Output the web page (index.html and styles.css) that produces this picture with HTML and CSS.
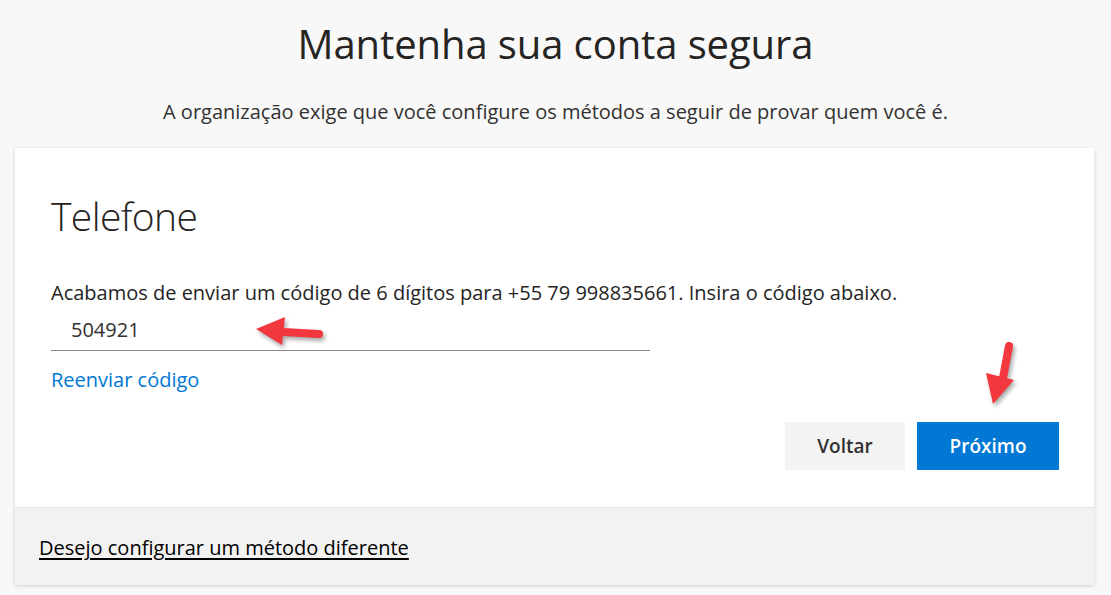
FILE: index.html
```html
<!DOCTYPE html>
<html lang="pt-BR">
<head>
<meta charset="utf-8">
<title>Mantenha sua conta segura</title>
<link rel="stylesheet" href="styles.css">
</head>
<body>
<header class="page-head">
  <h1 class="title">Mantenha sua conta segura</h1>
  <p class="subtitle">A organização exige que você configure os métodos a seguir de provar quem você é.</p>
</header>
<main class="card">
  <section class="card-body">
    <h2 class="method">Telefone</h2>
    <p class="info">Acabamos de enviar um código de 6 dígitos para +55 79 998835661. Insira o código abaixo.</p>
    <div class="field">
      <input class="code" type="text" value="504921" aria-label="Código">
    </div>
    <a class="resend" href="#">Reenviar código</a>
    <div class="actions">
      <button class="btn btn-back" type="button">Voltar</button>
      <button class="btn btn-next" type="button">Próximo</button>
    </div>
    <svg class="arrow arrow-left" width="80" height="44" viewBox="0 0 80 44" aria-hidden="true">
      <path d="M70 20 L34 18" stroke="#f2373f" stroke-width="8" stroke-linecap="round" fill="none"/>
      <path d="M7 15 L36 3 L33 31 Z" fill="#f2373f"/>
    </svg>
    <svg class="arrow arrow-down" width="44" height="80" viewBox="0 0 44 80" aria-hidden="true">
      <path d="M29 6 L23 38" stroke="#f2373f" stroke-width="8" stroke-linecap="round" fill="none"/>
      <path d="M6 33 L34 40 L13 64 Z" fill="#f2373f"/>
    </svg>
  </section>
  <footer class="card-foot">
    <a class="other" href="#">Desejo configurar um método diferente</a>
  </footer>
</main>
</body>
</html>
```

FILE: styles.css
```css
* { box-sizing: border-box; }
html, body { margin: 0; padding: 0; }
body {
  background: #f8f8f8;
  color: #323130;
  font-family: "Open Sans", "Noto Sans", "DejaVu Sans", sans-serif;
  width: 1111px;
  height: 595px;
  overflow: hidden;
}
.page-head {
  text-align: center;
  padding-top: 17px;
}
.title {
  margin: 0;
  font-weight: 400;
  font-size: 40px;
  line-height: 54px;
  letter-spacing: -0.1px;
  color: #252423;
}
.subtitle {
  margin: 27px 0 0;
  font-size: 20px;
  line-height: 28px;
  color: #323130;
}
.card {
  margin: 22px 17px 0 15px;
  background: #fff;
  box-shadow: 0 1px 4px rgba(0,0,0,0.16);
}
.card-body {
  position: relative;
  height: 359px;
  padding: 40px 35px 0 36px;
}
.method {
  margin: 0;
  font-weight: 300;
  font-size: 39px;
  line-height: 56px;
  letter-spacing: -0.6px;
  color: #252423;
}
.info {
  margin: 35px 0 0;
  font-size: 20px;
  line-height: 28px;
  color: #252423;
}
.field {
  margin-top: 5px;
  width: 599px;
  border-bottom: 1px solid #8a8886;
}
.code {
  display: block;
  width: 100%;
  border: 0;
  outline: 0;
  background: transparent;
  padding: 4px 0 6px 20px;
  font: inherit;
  font-size: 20px;
  line-height: 28px;
  color: #323130;
}
.resend {
  display: inline-block;
  margin-top: 15px;
  font-size: 20px;
  line-height: 28px;
  color: #0078d4;
  text-decoration: none;
}
.actions {
  display: flex;
  justify-content: flex-end;
  gap: 12px;
  margin-top: 28px;
}
.btn {
  height: 48px;
  border: 0;
  font-family: inherit;
  font-size: 19px;
  font-weight: 600;
  cursor: pointer;
}
.btn-back {
  width: 120px;
  background: #f3f3f3;
  color: #323130;
}
.btn-next {
  width: 142px;
  background: #0078d4;
  color: #fff;
}
.arrow {
  position: absolute;
  filter: drop-shadow(2px 3px 2px rgba(0,0,0,0.35));
}
.arrow-left { left: 234px; top: 166px; }
.arrow-down { left: 965px; top: 192px; }
.card-foot {
  height: 78px;
  background: #f2f2f2;
  border-top: 1px solid #e6e6e6;
  padding: 26px 24px 0;
}
.other {
  font-size: 20px;
  line-height: 28px;
  color: #000;
  text-decoration: underline;
  text-underline-offset: 3px;
}
```
